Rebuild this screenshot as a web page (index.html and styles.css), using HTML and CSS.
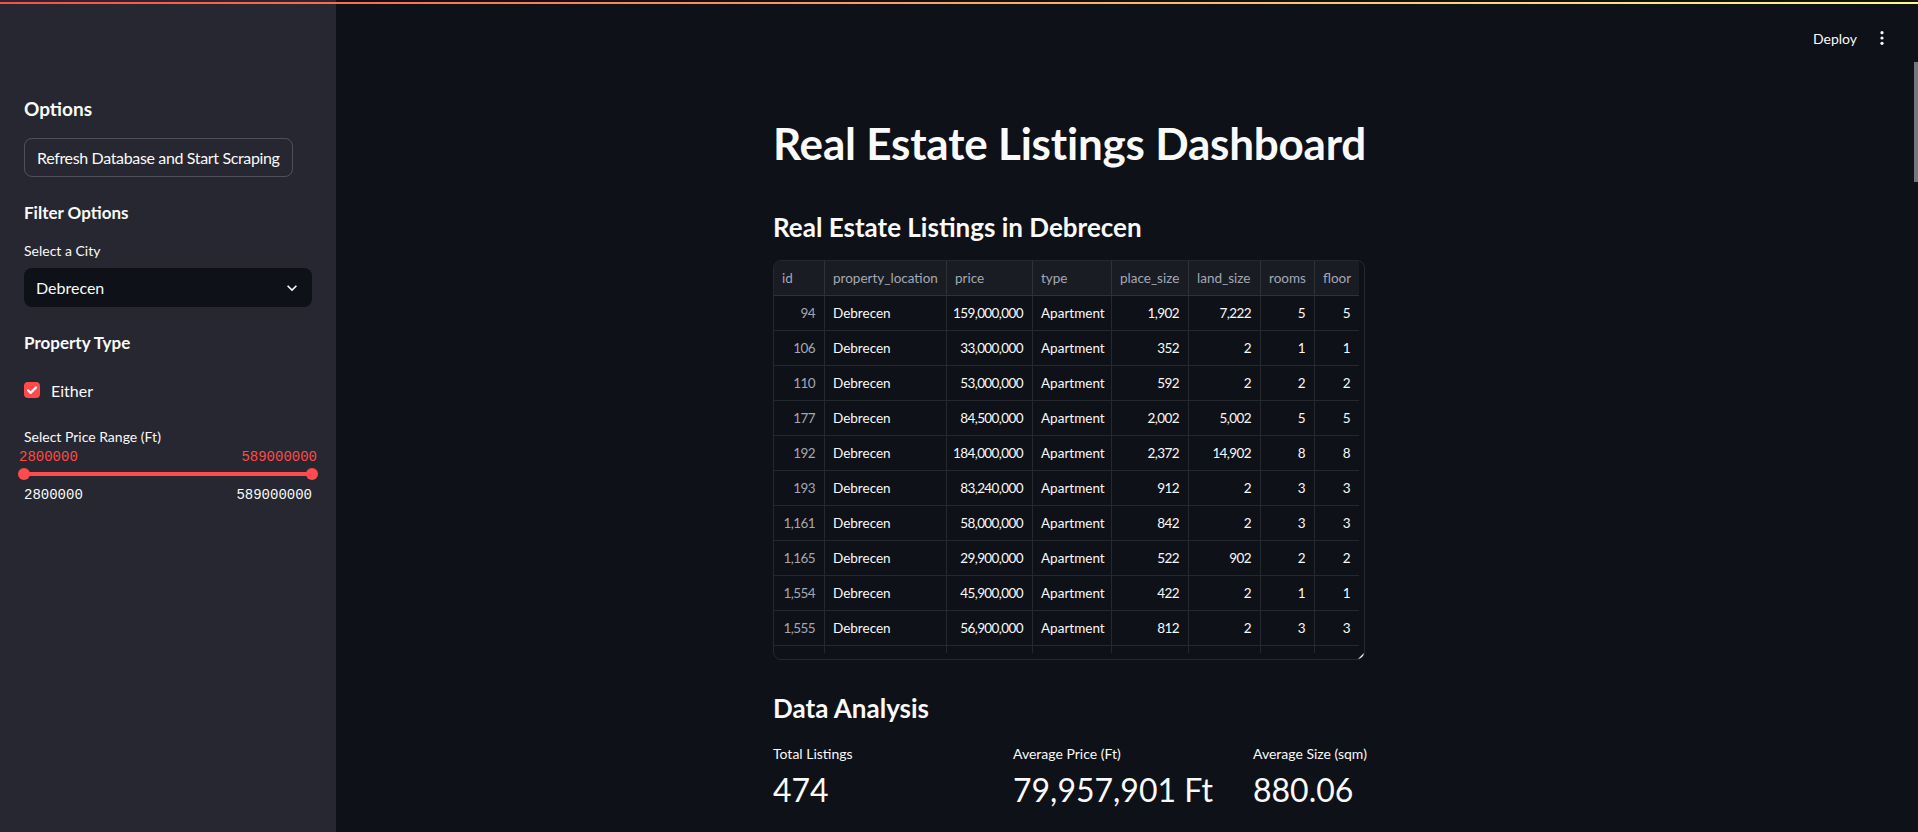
FILE: index.html
```html
<!DOCTYPE html>
<html lang="en">
<head>
<meta charset="utf-8">
<title>Real Estate Listings Dashboard</title>
<link rel="stylesheet" href="styles.css">
</head>
<body>
<div class="decoration"></div>
<div class="app">
  <aside class="sidebar">
    <h3 class="sb-title">Options</h3>
    <button class="btn">Refresh Database and Start Scraping</button>
    <h4 class="sb-head sb-filter">Filter Options</h4>
    <div class="wlabel wlabel-city">Select a City</div>
    <div class="select">
      <span>Debrecen</span>
      <svg class="chev" viewBox="0 0 24 24" width="20" height="20"><path d="M16.59 8.59L12 13.17 7.41 8.59 6 10l6 6 6-6z" fill="#fafafa"/></svg>
    </div>
    <h4 class="sb-head sb-prop">Property Type</h4>
    <div class="check">
      <span class="box"><svg viewBox="0 0 16 16" width="16" height="16"><path d="M4 8.3l2.6 2.6L12 5.5" fill="none" stroke="#fff" stroke-width="2.2" stroke-linecap="round" stroke-linejoin="round"/></svg></span>
      <span class="check-text">Either</span>
    </div>
    <div class="wlabel wlabel-price">Select Price Range (Ft)</div>
    <div class="slider">
      <span class="sval sval-l">2800000</span>
      <span class="sval sval-r">589000000</span>
      <div class="track"></div>
      <span class="thumb thumb-l"></span>
      <span class="thumb thumb-r"></span>
    </div>
    <div class="ticks"><span>2800000</span><span>589000000</span></div>
  </aside>
  <main class="main">
    <header class="toolbar">
      <span class="deploy">Deploy</span>
      <svg class="kebab" viewBox="0 0 6 14" width="6" height="14"><circle cx="3" cy="1.7" r="1.6" fill="#fafafa"/><circle cx="3" cy="7" r="1.6" fill="#fafafa"/><circle cx="3" cy="12.3" r="1.6" fill="#fafafa"/></svg>
    </header>
    <div class="block">
      <h1 class="title">Real Estate Listings Dashboard</h1>
      <h3 class="sub sub-first">Real Estate Listings in Debrecen</h3>
      <div class="df">
        <div class="grid">
          <div class="row head">
            <div class="c">id</div><div class="c">property_location</div><div class="c">price</div><div class="c">type</div><div class="c">place_size</div><div class="c">land_size</div><div class="c">rooms</div><div class="c last">floor</div>
          </div>
          <div class="row"><div class="c n idx">94</div><div class="c">Debrecen</div><div class="c n">159,000,000</div><div class="c">Apartment</div><div class="c n">1,902</div><div class="c n">7,222</div><div class="c n">5</div><div class="c n last">5</div></div>
          <div class="row"><div class="c n idx">106</div><div class="c">Debrecen</div><div class="c n">33,000,000</div><div class="c">Apartment</div><div class="c n">352</div><div class="c n">2</div><div class="c n">1</div><div class="c n last">1</div></div>
          <div class="row"><div class="c n idx">110</div><div class="c">Debrecen</div><div class="c n">53,000,000</div><div class="c">Apartment</div><div class="c n">592</div><div class="c n">2</div><div class="c n">2</div><div class="c n last">2</div></div>
          <div class="row"><div class="c n idx">177</div><div class="c">Debrecen</div><div class="c n">84,500,000</div><div class="c">Apartment</div><div class="c n">2,002</div><div class="c n">5,002</div><div class="c n">5</div><div class="c n last">5</div></div>
          <div class="row"><div class="c n idx">192</div><div class="c">Debrecen</div><div class="c n">184,000,000</div><div class="c">Apartment</div><div class="c n">2,372</div><div class="c n">14,902</div><div class="c n">8</div><div class="c n last">8</div></div>
          <div class="row"><div class="c n idx">193</div><div class="c">Debrecen</div><div class="c n">83,240,000</div><div class="c">Apartment</div><div class="c n">912</div><div class="c n">2</div><div class="c n">3</div><div class="c n last">3</div></div>
          <div class="row"><div class="c n idx">1,161</div><div class="c">Debrecen</div><div class="c n">58,000,000</div><div class="c">Apartment</div><div class="c n">842</div><div class="c n">2</div><div class="c n">3</div><div class="c n last">3</div></div>
          <div class="row"><div class="c n idx">1,165</div><div class="c">Debrecen</div><div class="c n">29,900,000</div><div class="c">Apartment</div><div class="c n">522</div><div class="c n">902</div><div class="c n">2</div><div class="c n last">2</div></div>
          <div class="row"><div class="c n idx">1,554</div><div class="c">Debrecen</div><div class="c n">45,900,000</div><div class="c">Apartment</div><div class="c n">422</div><div class="c n">2</div><div class="c n">1</div><div class="c n last">1</div></div>
          <div class="row"><div class="c n idx">1,555</div><div class="c">Debrecen</div><div class="c n">56,900,000</div><div class="c">Apartment</div><div class="c n">812</div><div class="c n">2</div><div class="c n">3</div><div class="c n last">3</div></div>
          <div class="row"><div class="c"></div><div class="c"></div><div class="c"></div><div class="c"></div><div class="c"></div><div class="c"></div><div class="c"></div><div class="c last"></div></div>
        </div>
        <svg class="resize" viewBox="0 0 6 6" width="6" height="6"><polygon points="6,0 6,6 0,6" fill="#fafafa"/></svg>
      </div>
      <h3 class="sub sub-analysis">Data Analysis</h3>
      <div class="metrics">
        <div class="metric"><div class="mlabel">Total Listings</div><div class="mvalue">474</div></div>
        <div class="metric"><div class="mlabel">Average Price (Ft)</div><div class="mvalue">79,957,901 Ft</div></div>
        <div class="metric"><div class="mlabel">Average Size (sqm)</div><div class="mvalue">880.06</div></div>
      </div>
    </div>
    <div class="scroll-thumb"></div>
  </main>
</div>
</body>
</html>
```

FILE: styles.css
```css
* { box-sizing: border-box; }

html, body {
  margin: 0;
  height: 832px;
  overflow: hidden;
  background: #0e1117;
  color: #fafafa;
  font-family: Lato, "Liberation Sans", sans-serif;
}

.decoration {
  position: fixed;
  top: 2px;
  left: 0;
  right: 0;
  height: 2px;
  background: linear-gradient(90deg, #ff4b4b, #fffd80);
  z-index: 10;
}

.app {
  display: flex;
  height: 832px;
}

/* ---------- Sidebar ---------- */
.sidebar {
  width: 336px;
  flex: 0 0 336px;
  background: #262730;
  padding: 97px 24px 0 24px;
  display: flex;
  flex-direction: column;
  align-items: flex-start;
}
.sidebar > * { flex-shrink: 0; }

.sb-title {
  margin: 0;
  font-size: 19px;
  line-height: 24px;
  font-weight: 700;
}

.btn {
  margin-top: 17px;
  height: 39px;
  padding: 0 12px;
  background: transparent;
  border: 1px solid rgba(250, 250, 250, 0.2);
  border-radius: 8px;
  color: #fafafa;
  font-family: inherit;
  font-size: 16px;
  letter-spacing: -0.35px;
  line-height: 1;
}

.sb-head {
  margin: 0;
  font-size: 17px;
  line-height: 22px;
  font-weight: 700;
}
.sb-filter { margin-top: 25px; }
.sb-prop { margin-top: 25px; }

.wlabel {
  font-size: 14px;
  line-height: 17px;
}
.wlabel-city { margin-top: 18px; }
.wlabel-price { margin-top: 26px; }

.select {
  margin-top: 9px;
  width: 288px;
  height: 39px;
  background: #0e1117;
  border-radius: 8px;
  display: flex;
  align-items: center;
  justify-content: space-between;
  padding: 0 10px 0 12px;
  font-size: 16px;
}

.check {
  margin-top: 24px;
  height: 24px;
  display: flex;
  align-items: center;
  gap: 11px;
  font-size: 16px;
}
.check .box {
  width: 16px;
  height: 16px;
  border-radius: 4px;
  background: #ff4b4b;
  display: flex;
}

.slider {
  position: relative;
  width: 288px;
  height: 42px;
}
.track {
  position: absolute;
  left: 0;
  right: 0;
  top: 27px;
  height: 4px;
  background: #ff4b4b;
  border-radius: 2px;
}
.thumb {
  position: absolute;
  top: 23px;
  width: 12px;
  height: 12px;
  border-radius: 50%;
  background: #ff4b4b;
}
.thumb-l { left: -6px; }
.thumb-r { right: -6px; }
.sval {
  position: absolute;
  top: 4px;
  font-family: "Liberation Mono", "DejaVu Sans Mono", monospace;
  font-size: 14px;
  line-height: 17px;
  color: #ff4b4b;
}
.sval-l { left: -5px; }
.sval-r { right: -5px; }

.ticks {
  width: 288px;
  display: flex;
  justify-content: space-between;
  font-family: "Liberation Mono", "DejaVu Sans Mono", monospace;
  font-size: 14px;
  line-height: 17px;
}

/* ---------- Main ---------- */
.main {
  position: relative;
  flex: 1;
  padding-right: 4px;
  display: flex;
  flex-direction: column;
  align-items: center;
}
.main > * { flex-shrink: 0; }

.toolbar {
  align-self: stretch;
  height: 76px;
  display: flex;
  justify-content: flex-end;
  align-items: center;
  gap: 22px;
  padding-right: 29px;
}
.deploy {
  font-size: 14px;
  line-height: 17px;
}

.block {
  width: 704px;
}

.title {
  margin: 41px 0 0 0;
  font-size: 44px;
  letter-spacing: -0.2px;
  line-height: 53px;
  font-weight: 700;
}

.sub {
  margin: 0;
  font-size: 26px;
  line-height: 31px;
  font-weight: 700;
}
.sub-first { margin-top: 42px; }
.sub-analysis { margin-top: 33px; }

.df {
  position: relative;
  margin-top: 17px;
  width: 592px;
  height: 400px;
  border: 1px solid rgba(250, 250, 250, 0.1);
  border-radius: 8px;
  overflow: hidden;
}
.grid {
  height: 392px;
  overflow: hidden;
}
.row {
  display: grid;
  grid-template-columns: 51px 122px 86px 79px 77px 72px 54px 44px;
  width: 585px;
}
.c {
  height: 35px;
  padding: 0 8px;
  border-right: 1px solid rgba(250, 250, 250, 0.1);
  border-bottom: 1px solid rgba(250, 250, 250, 0.1);
  font-size: 13.5px;
  line-height: 34px;
  white-space: nowrap;
  overflow: hidden;
}
.c.last { border-right: none; }
.head .c {
  background: #1a1c24;
  color: #a3a8b4;
}
.n {
  text-align: right;
  letter-spacing: -0.6px;
  padding-right: 9px;
  padding-left: 4px;
}
.idx { color: #a3a8b4; }

.resize {
  position: absolute;
  right: 0;
  bottom: 0;
}

.metrics {
  margin-top: 21px;
  display: grid;
  grid-template-columns: repeat(3, 1fr);
  gap: 16px;
}
.mlabel {
  font-size: 14px;
  line-height: 17px;
}
.mvalue {
  margin-top: 6px;
  font-size: 32px;
  line-height: 43px;
  white-space: nowrap;
}

.scroll-thumb {
  position: absolute;
  right: 0;
  top: 62px;
  width: 4px;
  height: 120px;
  background: #75767b;
}
```
